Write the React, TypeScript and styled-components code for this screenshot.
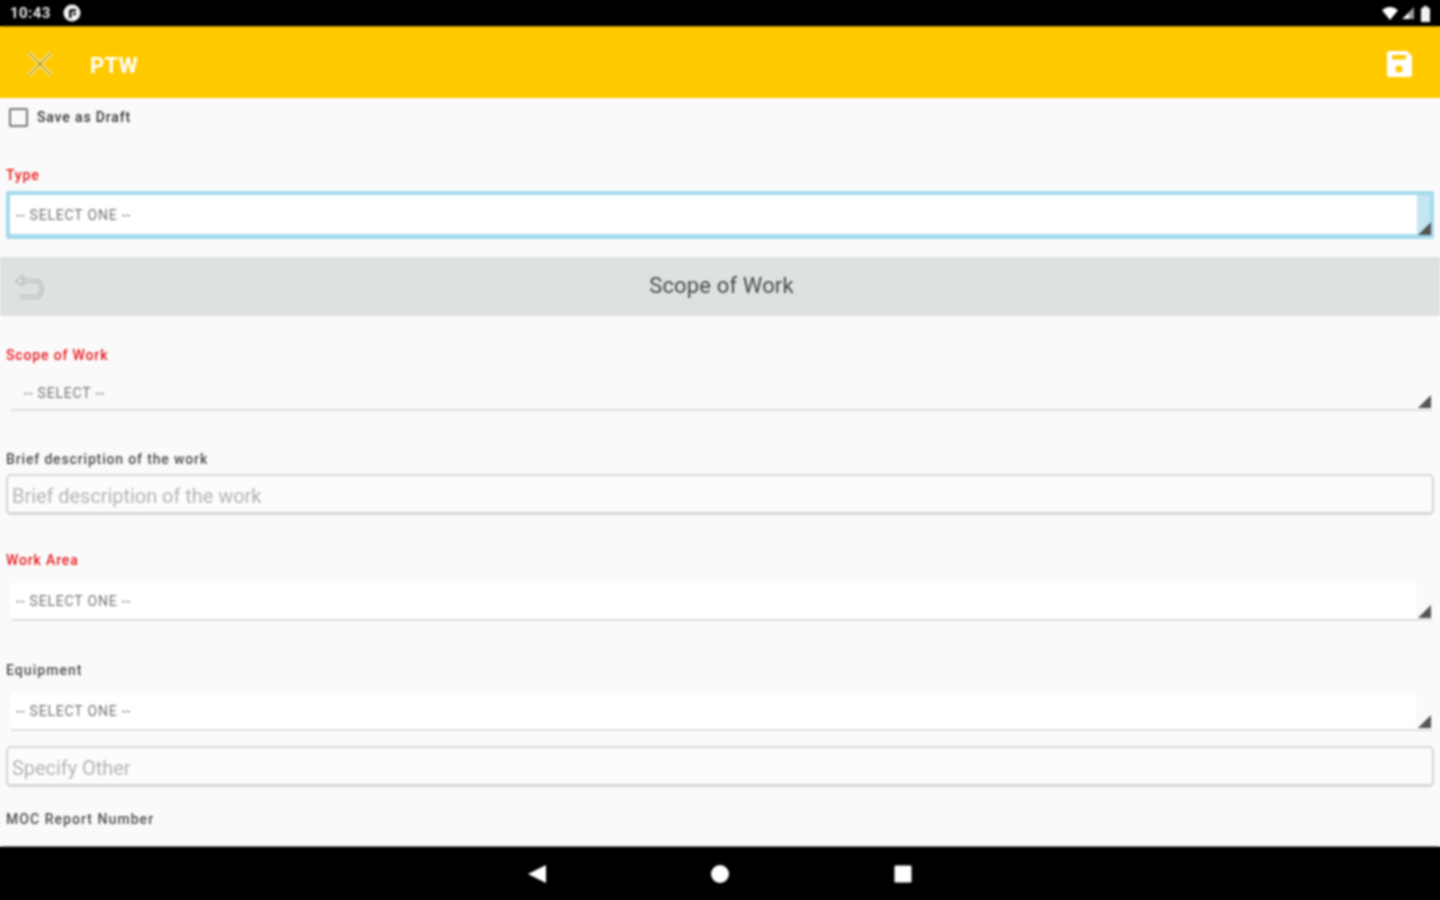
import React from "react";
import styled, { createGlobalStyle, css } from "styled-components";

const GlobalStyle = createGlobalStyle`
  html, body {
    margin: 0;
    padding: 0;
  }
  /* same bands as the bars, so the blur on Screen doesn't fade at the window edge */
  html {
    background: linear-gradient(
      to bottom,
      #000 26px,
      #ffc900 26px,
      #ffc900 98px,
      #fafafa 98px,
      #fafafa 847px,
      #000 847px
    );
  }
  * {
    box-sizing: border-box;
  }
`;

const Screen = styled.div`
  width: 1440px;
  height: 900px;
  display: flex;
  flex-direction: column;
  overflow: hidden;
  background: #fafafa;
  font-family: Roboto, "Liberation Sans", sans-serif;
  filter: blur(0.9px);
`;

const StatusBar = styled.div`
  height: 26px;
  flex: none;
  background: #000;
  display: flex;
  align-items: center;
  justify-content: space-between;
  padding: 0 8px 0 10px;
  color: #e8e8e8;
`;

const StatusLeft = styled.div`
  display: flex;
  align-items: center;
  gap: 12px;
`;

const Clock = styled.span`
  font-size: 15px;
  font-weight: 700;
  letter-spacing: 0.4px;
`;

const StatusRight = styled.div`
  display: flex;
  align-items: center;
  gap: 3px;
`;

const AppBar = styled.header`
  height: 72px;
  flex: none;
  background: #ffc900;
  display: flex;
  align-items: center;
  padding: 4px 26px 0 27px;
  box-shadow: inset 0 2px 1px -1px #b89000;
`;

const AppTitle = styled.h1`
  margin: 2px 0 0 37px;
  font-size: 22px;
  font-weight: 700;
  letter-spacing: 0.3px;
  color: #fff;
  flex: 1;
`;

const Form = styled.main`
  flex: 1;
  min-height: 0;
  overflow: hidden;
`;

const DraftRow = styled.label`
  display: flex;
  align-items: center;
  height: 38px;
  padding-left: 9px;
  gap: 9px;
  font-size: 14px;
  font-weight: 500;
  letter-spacing: 0.85px;
  color: #333;
`;

const CheckBox = styled.span`
  width: 19px;
  height: 19px;
  border: 2px solid #777;
  border-radius: 2px;
`;

const FieldLabel = styled.div<{ $required?: boolean; $wide?: boolean; $top: number }>`
  margin-top: ${(p) => p.$top}px;
  padding-left: 6px;
  height: 18px;
  line-height: 20px;
  font-size: 14px;
  font-weight: 500;
  letter-spacing: ${(p) => (p.$wide ? 1.05 : 0.85)}px;
  color: ${(p) => (p.$required ? "#e8191c" : "#4c4c4c")};
`;

const Corner = styled.svg`
  position: absolute;
  right: 1px;
  bottom: 1px;
  width: 13px;
  height: 13px;
`;

const Spinner = styled.div<{ $focused?: boolean; $top: number; $plain?: boolean }>`
  position: relative;
  display: flex;
  align-items: center;
  font-size: 14px;
  letter-spacing: 0.8px;
  color: #757575;
  ${(p) =>
    p.$focused
      ? css`
          margin: ${p.$top}px 6px 0;
          height: 48px;
          padding: 0 0 0 6px;
          background: linear-gradient(to right, #fff 1407px, #c4e5f3 1407px);
          border: 4px solid #a4dbec;
          border-bottom-width: 5px;
          border-radius: 2px;

          ${Corner} {
            right: -1px;
            bottom: -1px;
          }
        `
      : css`
          margin: ${p.$top}px 8px 0 11px;
          height: ${p.$plain ? 37 : 38}px;
          padding: ${p.$plain ? "2px 0 0 13px" : "0 0 0 5px"};
          background: ${p.$plain
            ? "transparent"
            : "linear-gradient(to right, #fff 1405px, transparent 1405px)"};
          border-bottom: 2px solid #dedede;
        `}
`;

const SectionBar = styled.div`
  position: relative;
  margin-top: 18px;
  height: 59px;
  background: #dde1e1;
  display: flex;
  align-items: center;
  justify-content: center;
  font-size: 22px;
  letter-spacing: 0.15px;
  color: #4a4a4a;
  padding-left: 3px;
  padding-bottom: 3px;
`;

const BackGlyph = styled.svg`
  position: absolute;
  left: 15px;
  top: 15px;
  width: 32px;
  height: 30px;
`;

const TextBox = styled.div<{ $top: number }>`
  margin: ${(p) => p.$top}px 6px 0;
  height: 41px;
  padding: 3px 0 0 4px;
  display: flex;
  align-items: center;
  border: 2px solid #d6d6d6;
  border-bottom-width: 3px;
  border-radius: 5px;
  background: #fcfcfc;
  font-size: 20px;
  letter-spacing: -0.05px;
  color: #b4b4b4;
`;

const NavBar = styled.nav`
  height: 54px;
  flex: none;
  background: #000;
  border-top: 1px solid #8a8a8a;
  display: flex;
  align-items: center;
  justify-content: center;
  gap: 163px;
`;

const NavIcon = styled.svg`
  width: 20px;
  height: 20px;
  fill: #fff;
`;

const SpinnerCorner = () => (
  <Corner viewBox="0 0 13 13">
    <path d="M13 0v13H0z" fill="#555" />
  </Corner>
);

export default function App() {
  return (
    <Screen>
      <GlobalStyle />
      <StatusBar>
        <StatusLeft>
          <Clock>10:43</Clock>
          <svg width="18" height="18" viewBox="0 0 18 18">
            <circle cx="9" cy="9" r="8.5" fill="#f2f2f2" />
            <path d="M6 14V7.5A2.5 2.5 0 0 1 8.5 5H13v2.5H9.5A1 1 0 0 0 8.5 8.5V14z" fill="#111" />
            <rect x="10" y="9" width="3" height="2" fill="#111" />
          </svg>
        </StatusLeft>
        <StatusRight>
          <svg width="16" height="13" viewBox="0 0 17 14">
            <path d="M0 3.5C2 1.4 5 0 8.5 0S15 1.4 17 3.5L8.5 14z" fill="#fff" />
          </svg>
          <svg width="14" height="14" viewBox="0 0 14 14">
            <path d="M13 1v12H1z" fill="#9a9a9a" />
            <path d="M8 7v6H1.5z" fill="#fff" />
          </svg>
          <svg width="12" height="17" viewBox="0 0 12 17" style={{ marginLeft: 2 }}>
            <path d="M1 3h2.5V1h4v2H10v14H1z" fill="#f2f2f2" />
          </svg>
        </StatusRight>
      </StatusBar>
      <AppBar>
        <svg width="26" height="26" viewBox="0 0 26 26">
          <path d="M2 2l22 22M24 2L2 24" stroke="#fff0b0" strokeWidth="4" fill="none" />
          <path d="M2 2l22 22M24 2L2 24" stroke="#b08c00" strokeWidth="1.4" fill="none" />
        </svg>
        <AppTitle>PTW</AppTitle>
        <svg width="30" height="30" viewBox="0 0 30 30">
          <path d="M3 4a2 2 0 0 1 2-2h18l5 5v19a2 2 0 0 1-2 2H5a2 2 0 0 1-2-2z" fill="#fff" />
          <rect x="8" y="6" width="14" height="4.5" rx="1" fill="#ffc900" />
          <circle cx="15" cy="20" r="3.6" fill="#ffc900" />
        </svg>
      </AppBar>
      <Form>
        <DraftRow>
          <CheckBox />
          Save as Draft
        </DraftRow>
        <FieldLabel $required $top={29}>Type</FieldLabel>
        <Spinner $focused $top={8}>
          -- SELECT ONE --
          <SpinnerCorner />
        </Spinner>
        <SectionBar>
          <BackGlyph viewBox="0 0 32 30">
            <path
              d="M9 4L3 9l6 4M3 9h19a4.5 8 0 0 1 0 16H5"
              stroke="#a6aaaa"
              strokeWidth="3.6"
              fill="none"
            />
            <path
              d="M9 4L3 9l6 4M3 9h19a4.5 8 0 0 1 0 16H5"
              stroke="#eef0f0"
              strokeWidth="1.4"
              fill="none"
            />
          </BackGlyph>
          Scope of Work
        </SectionBar>
        <FieldLabel $required $top={29}>Scope of Work</FieldLabel>
        <Spinner $plain $top={11}>
          -- SELECT --
          <SpinnerCorner />
        </Spinner>
        <FieldLabel $top={38}>Brief description of the work</FieldLabel>
        <TextBox $top={7}>Brief description of the work</TextBox>
        <FieldLabel $required $top={35}>Work Area</FieldLabel>
        <Spinner $top={15}>
          -- SELECT ONE --
          <SpinnerCorner />
        </Spinner>
        <FieldLabel $wide $top={39}>Equipment</FieldLabel>
        <Spinner $top={15}>
          -- SELECT ONE --
          <SpinnerCorner />
        </Spinner>
        <TextBox $top={15}>Specify Other</TextBox>
        <FieldLabel $wide $top={22}>MOC Report Number</FieldLabel>
      </Form>
      <NavBar>
        <NavIcon viewBox="0 0 20 20">
          <path d="M19 1v18L1 10z" />
        </NavIcon>
        <NavIcon viewBox="0 0 20 20">
          <circle cx="10" cy="10" r="9" />
        </NavIcon>
        <NavIcon viewBox="0 0 20 20">
          <rect x="1.5" y="1.5" width="17" height="17" rx="1" />
        </NavIcon>
      </NavBar>
    </Screen>
  );
}
